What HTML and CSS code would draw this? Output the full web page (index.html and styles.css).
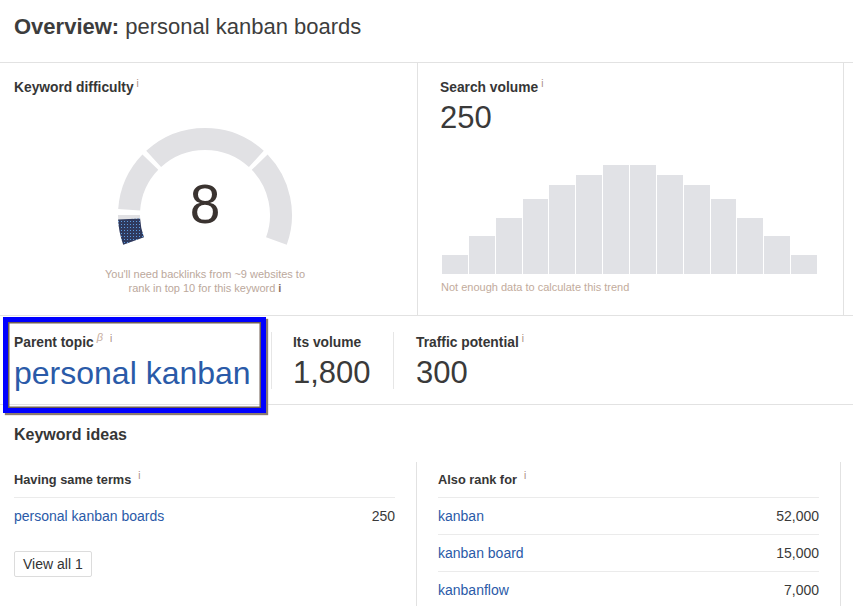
FILE: index.html
```html
<!DOCTYPE html>
<html>
<head>
<meta charset="utf-8">
<link rel="stylesheet" href="styles.css">
</head>
<body>
<div class="header">
  <h1 class="title"><b>Overview:</b> personal kanban boards</h1>
</div>

<div class="top-row">
  <div class="card kd">
    <div class="label">Keyword difficulty<span class="info">i</span></div>
    <div class="gauge">
      <svg class="gauge-svg" width="200" height="150" viewBox="0 0 200 150">
        <defs>
          <pattern id="dots" width="3" height="3" patternUnits="userSpaceOnUse">
            <rect width="3" height="3" fill="#2f3a5e"/>
            <rect x="1" y="1" width="1" height="1" fill="#5b9be2"/>
          </pattern>
        </defs>
        <g fill="none" stroke="#e1e1e4" stroke-width="22">
          <path d="M 24.18 94.70 A 76 76 0 0 1 45.33 47.20"/>
          <path d="M 48.66 43.97 A 76 76 0 0 1 151.34 43.97"/>
          <path d="M 154.67 47.20 A 76 76 0 0 1 171.42 125.99"/>
          <path d="M 28.58 125.99 A 76 76 0 0 1 24 100"/>
        </g>
        <path d="M 28.58 125.99 A 76 76 0 0 1 24.10 103.98" fill="none" stroke="url(#dots)" stroke-width="22"/>
        <text x="100" y="108" text-anchor="middle" class="kd-num">8</text>
      </svg>
      <p class="gauge-note">You'll need backlinks from ~9 websites to<br>rank in top 10 for this keyword <b>i</b></p>
    </div>
  </div>
  <div class="card sv">
    <div class="label">Search volume<span class="info">i</span></div>
    <div class="big">250</div>
    <div class="chart">
      <div class="bar" style="height:19px"></div>
      <div class="bar" style="height:38px"></div>
      <div class="bar" style="height:56px"></div>
      <div class="bar" style="height:75px"></div>
      <div class="bar" style="height:89px"></div>
      <div class="bar" style="height:99px"></div>
      <div class="bar" style="height:109px"></div>
      <div class="bar" style="height:109px"></div>
      <div class="bar" style="height:99px"></div>
      <div class="bar" style="height:89px"></div>
      <div class="bar" style="height:75px"></div>
      <div class="bar" style="height:56px"></div>
      <div class="bar" style="height:38px"></div>
      <div class="bar" style="height:19px"></div>
    </div>
    <p class="trend-note">Not enough data to calculate this trend</p>
  </div>
</div>

<div class="mid-row">
  <div class="cell parent">
    <div class="label">Parent topic<span class="beta">β</span><span class="info info-gap">i</span></div>
    <a class="big link" href="#">personal kanban</a>
    <div class="highlight"></div>
  </div>
  <div class="cell vol">
    <div class="label">Its volume</div>
    <div class="big">1,800</div>
  </div>
  <div class="cell traffic">
    <div class="label">Traffic potential<span class="info">i</span></div>
    <div class="big">300</div>
  </div>
</div>

<div class="ideas">
  <h2 class="ideas-title">Keyword ideas</h2>
  <div class="ideas-grid">
    <div class="col left">
      <div class="col-head">Having same terms<span class="info info-gap">i</span></div>
      <div class="row"><a href="#" class="kw">personal kanban boards</a><span class="num">250</span></div>
      <button class="view-all">View all 1</button>
    </div>
    <div class="col right">
      <div class="col-head">Also rank for<span class="info info-gap">i</span></div>
      <div class="row"><a href="#" class="kw">kanban</a><span class="num">52,000</span></div>
      <div class="row"><a href="#" class="kw">kanban board</a><span class="num">15,000</span></div>
      <div class="row"><a href="#" class="kw">kanbanflow</a><span class="num">7,000</span></div>
    </div>
  </div>
</div>
</body>
</html>
```
FILE: styles.css
```css
* { box-sizing: border-box; }
html, body { margin: 0; padding: 0; background: #fff; }
body {
  font-family: "Liberation Sans", Arial, sans-serif;
  color: #3b3b3b;
  width: 853px;
  height: 607px;
  overflow: hidden;
}
a { text-decoration: none; }

.header { height: 62px; padding: 14px 0 0 14px; }
.title {
  margin: 0;
  font-size: 22px;
  line-height: 26px;
  font-weight: normal;
  color: #3d3d3d;
}
.title b { font-weight: bold; }

.label {
  font-size: 13.8px;
  line-height: 16px;
  font-weight: bold;
  color: #363636;
  white-space: nowrap;
}
.info {
  font-size: 10px;
  line-height: 0;
  font-weight: normal;
  color: #a88c7c;
  vertical-align: 5px;
  margin-left: 3px;
}
.info-gap { margin-left: 7px; }
.beta {
  font-size: 11px;
  line-height: 0;
  font-style: italic;
  font-weight: normal;
  color: #c8ae9e;
  vertical-align: 6px;
  margin-left: 3px;
}

.top-row {
  display: flex;
  height: 254px;
  border-top: 1px solid #e2e2e2;
  border-bottom: 1px solid #e2e2e2;
}
.card { padding-top: 17px; border-right: 1px solid #e2e2e2; }
.kd { width: 418px; padding-left: 14px; }
.sv { width: 426px; padding-left: 22px; }

.gauge {
  width: 240px;
  margin: 19px 0 0 71px;
  text-align: center;
}
.gauge-svg { display: block; margin: 0 auto; }
.kd-num {
  font-family: "Liberation Sans", Arial, sans-serif;
  font-size: 55px;
  fill: #3a3330;
}
.gauge-note {
  margin: 3px 0 0;
  font-size: 11px;
  line-height: 13.5px;
  color: #bba89c;
}
.gauge-note b { color: #8a6f60; font-weight: bold; }

.big {
  display: block;
  margin-top: 5px;
  font-size: 31px;
  line-height: 34px;
  color: #3a3a3a;
  white-space: nowrap;
}
.link { color: #2a5aa8; font-size: 32px; }

.chart {
  display: flex;
  align-items: flex-end;
  gap: 1px;
  width: 375px;
  height: 139px;
  margin-left: 2px;
}
.bar { flex: 1; background: #e1e2e6; }
.trend-note {
  margin: 7px 0 0 1px;
  font-size: 11px;
  line-height: 13px;
  color: #c2ab9c;
}

.mid-row {
  display: flex;
  height: 89px;
  padding: 16px 0 0 14px;
  border-bottom: 1px solid #e2e2e2;
}
.cell { height: 57px; padding-top: 3px; }
.parent { position: relative; width: 257px; }
.vol { width: 122px; padding-left: 21px; border-left: 1px solid #e6e6e6; }
.traffic { padding-left: 22px; border-left: 1px solid #e6e6e6; }

.highlight {
  position: absolute;
  left: -11px;
  top: -15px;
  width: 263px;
  height: 96px;
  border: 5px solid #0000ff;
  box-shadow: inset 0 0 0 1.5px #6e5e54, 2px 2px 1px #8c7b6e;
  pointer-events: none;
}

.ideas { padding-left: 14px; }
.ideas-title {
  margin: 20px 0 0;
  font-size: 16px;
  line-height: 20px;
  font-weight: bold;
  color: #363636;
}
.ideas-grid {
  display: flex;
  gap: 21px;
  margin-top: 17px;
}
.col { padding-top: 10px; }
.left { width: 381px; }
.right {
  width: 425px;
  height: 144px;
  padding-left: 21px;
  padding-right: 21px;
  border-left: 1px solid #e2e2e2;
  border-right: 1px solid #e2e2e2;
}
.col-head {
  font-size: 12.8px;
  line-height: 16px;
  font-weight: bold;
  color: #363636;
  padding-bottom: 9px;
  border-bottom: 1px solid #ebebeb;
}
.row {
  display: flex;
  justify-content: space-between;
  align-items: center;
  height: 37px;
  font-size: 14px;
  line-height: 16px;
  border-bottom: 1px solid #ebebeb;
}
.right .row:last-child { border-bottom: none; height: 36px; }
.left .row { border-bottom: none; height: 36px; }
.kw { color: #2a5aa8; }
.num { color: #3a3a3a; }

.view-all {
  display: block;
  margin-top: 17px;
  height: 26px;
  padding: 0 8px;
  font-family: "Liberation Sans", Arial, sans-serif;
  font-size: 14px;
  line-height: 24px;
  color: #333;
  background: #fff;
  border: 1px solid #dcdcdc;
  border-radius: 2px;
}
```
